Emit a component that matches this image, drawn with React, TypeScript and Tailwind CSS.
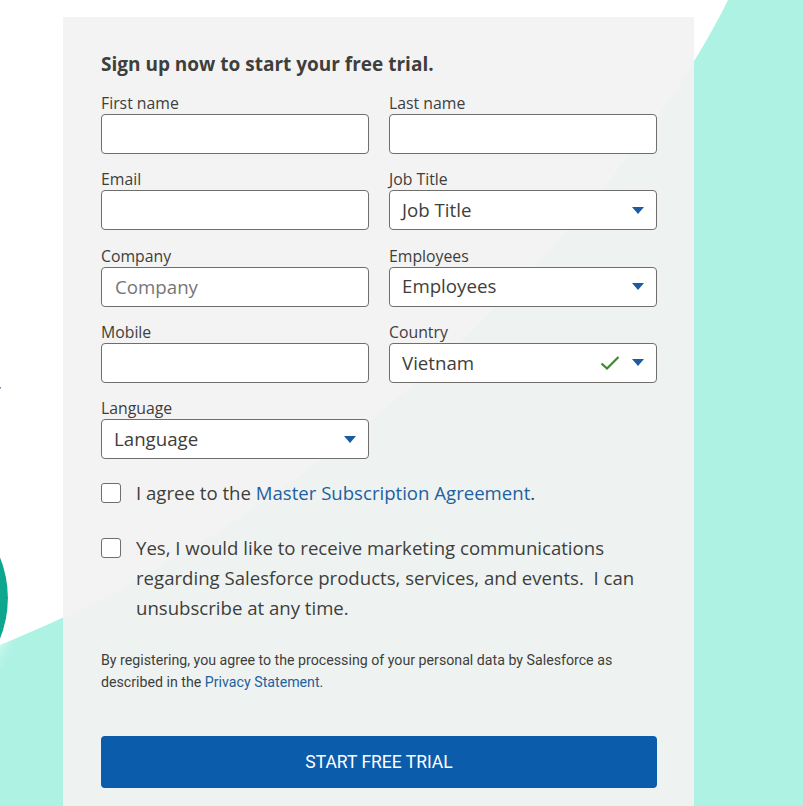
import React from 'react';

const Label: React.FC<{ children: React.ReactNode }> = ({ children }) => (
  <label className="block text-[15.8px] leading-[18px] text-[#3e3e3c] mb-[2px]">{children}</label>
);

const TextInput: React.FC<{ label: string; placeholder?: string }> = ({ label, placeholder }) => (
  <div>
    <Label>{label}</Label>
    <input
      placeholder={placeholder}
      className="block w-full h-[40px] rounded-[4px] border border-[#706e6b] bg-white px-[13px] text-[18.7px] text-[#3e3e3c] placeholder:text-[#767676] outline-none"
    />
  </div>
);

const Caret = () => (
  <svg width="12" height="7" viewBox="0 0 12 7" className="shrink-0">
    <path d="M0 0 H12 L6 7 Z" fill="#1d5ba1" />
  </svg>
);

const SelectBox: React.FC<{ label: string; value: string; valid?: boolean }> = ({ label, value, valid }) => (
  <div>
    <Label>{label}</Label>
    <div className="flex items-center h-[40px] rounded-[4px] border border-[#706e6b] bg-white pl-[12px] pr-[12px] text-[18.7px] text-[#3e3e3c]">
      <span className="flex-1">{value}</span>
      {valid && (
        <svg width="20" height="16" viewBox="0 0 20 16" className="mr-[12px]">
          <path d="M1.5 8.5 L7 13.5 L18.5 2" fill="none" stroke="#3b8a2c" strokeWidth="2.2" />
        </svg>
      )}
      <Caret />
    </div>
  </div>
);

const Checkbox: React.FC<{ children: React.ReactNode }> = ({ children }) => (
  <div className="flex items-start gap-[15px]">
    <span className="mt-[5px] block w-[20px] h-[20px] shrink-0 rounded-[3px] border border-[#706e6b] bg-white" />
    <p className="text-[18.6px] leading-[30px] text-[#3e3e3c]">{children}</p>
  </div>
);

export default function App() {
  return (
    <div className="relative h-[806px] w-full overflow-hidden bg-white font-['Open_Sans',sans-serif]">
      {/* background shapes */}
      <svg className="absolute inset-0" width="803" height="806" viewBox="0 0 803 806">
        <defs>
          <filter id="glow" x="-50%" y="-50%" width="200%" height="200%">
            <feDropShadow dx="0" dy="0" stdDeviation="9" floodColor="#ffffff" floodOpacity="1" />
          </filter>
        </defs>
        <path d="M728 0 C640 180 360 500 0 645 L0 806 L803 806 L803 0 Z" fill="#adf2e3" />
        <circle cx="-101" cy="598" r="109" fill="#0ba68f" filter="url(#glow)" />
      </svg>
      <span className="absolute left-[-26px] top-[376px] text-[20px] text-[#3e3e3c]">for</span>

      <div className="relative ml-[63px] mt-[17px] w-[631px] bg-[#f2f2f2]/[0.94] pl-[38px] pr-[37px] pt-[33px] pb-[40px]">
        <h2 className="text-[19px] leading-[28px] font-bold text-[#3e3e3c]">Sign up now to start your free trial.</h2>

        <div className="mt-[16px] grid grid-cols-2 gap-x-[20px] gap-y-[16.25px]">
          <TextInput label="First name" />
          <TextInput label="Last name" />
          <TextInput label="Email" />
          <SelectBox label="Job Title" value="Job Title" />
          <TextInput label="Company" placeholder="Company" />
          <SelectBox label="Employees" value="Employees" />
          <TextInput label="Mobile" />
          <SelectBox label="Country" value="Vietnam" valid />
          <SelectBox label="Language" value="Language" />
        </div>

        <div className="mt-[19px] flex flex-col gap-[25px]">
          <Checkbox>
            I agree to the <a className="text-[#23609f]">Master Subscription Agreement</a>.
          </Checkbox>
          <Checkbox>
            Yes, I would like to receive marketing communications regarding Salesforce products, services, and events.&nbsp; I can unsubscribe at any time.
          </Checkbox>
        </div>

        <p className="mt-[26px] text-[14.2px] leading-[22px] text-[#3e3e3c] font-['Roboto',sans-serif]">
          By registering, you agree to the processing of your personal data by Salesforce as described in the{' '}
          <a className="text-[#23609f]">Privacy Statement</a>.
        </p>

        <button className="mt-[43px] block w-full h-[52px] rounded-[4px] bg-[#0b5cab] text-white text-[17.5px] font-['Roboto',sans-serif]">
          START FREE TRIAL
        </button>
      </div>
    </div>
  );
}
